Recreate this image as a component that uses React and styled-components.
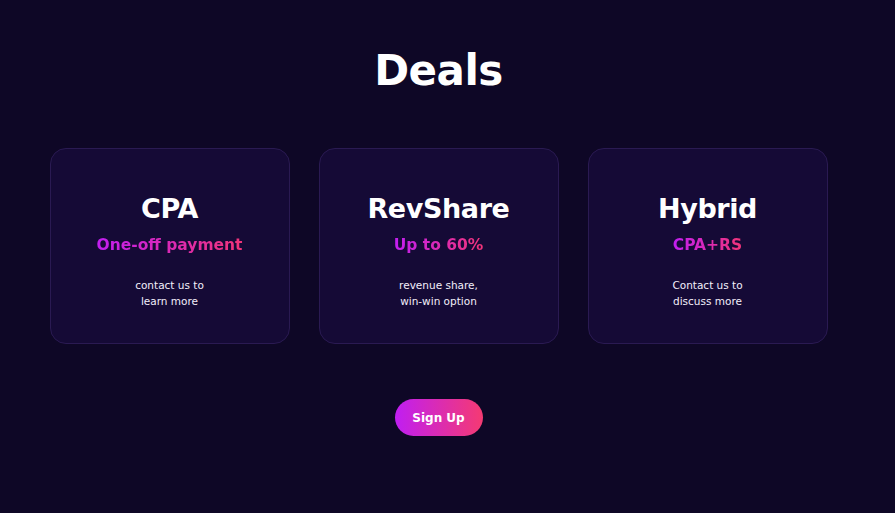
import React from 'react';
import styled, { createGlobalStyle } from 'styled-components';

const deals = [
  { title: 'CPA', sub: 'One-off payment', lines: ['contact us to', 'learn more'] },
  { title: 'RevShare', sub: 'Up to 60%', lines: ['revenue share,', 'win-win option'] },
  { title: 'Hybrid', sub: 'CPA+RS', lines: ['Contact us to', 'discuss more'] },
];

export default function App() {
  return (
    <>
      <Global />
      <Page>
        <Title>Deals</Title>
        <Cards>
          {deals.map((d) => (
            <Card key={d.title}>
              <CardTitle>{d.title}</CardTitle>
              <Sub>{d.sub}</Sub>
              <Desc>
                {d.lines.map((l) => (
                  <span key={l}>{l}</span>
                ))}
              </Desc>
            </Card>
          ))}
        </Cards>
        <Button>Sign Up</Button>
      </Page>
    </>
  );
}

const Global = createGlobalStyle`
html, body {
  margin: 0;
  background: #0e0726;
  font-family: "DejaVu Sans", "Noto Sans", sans-serif;
}
`;

const Page = styled.div`
width: 877px;
height: 513px;
display: flex;
flex-direction: column;
align-items: center;
padding-top: 44px;
box-sizing: border-box;
`;

const Title = styled.h1`
margin: 0;
font-size: 42px;
font-weight: 800;
color: #fff;
line-height: 54px;
letter-spacing: -0.5px;
`;

const Cards = styled.div`
display: flex;
gap: 29px;
margin-top: 50px;
`;

const Card = styled.div`
width: 240px;
height: 196px;
box-sizing: border-box;
background: #150a36;
border: 1px solid #2a1a52;
border-radius: 16px;
display: flex;
flex-direction: column;
align-items: center;
padding-top: 42px;
`;

const CardTitle = styled.h2`
margin: 0;
font-size: 27px;
font-weight: 800;
color: #fff;
line-height: 36px;
letter-spacing: -0.4px;
`;

const Sub = styled.div`
margin-top: 6px;
font-size: 15.5px;
font-weight: 700;
line-height: 24px;
background: linear-gradient(90deg, #c21ef2, #f23478);
-webkit-background-clip: text;
background-clip: text;
color: transparent;
`;

const Desc = styled.div`
margin-top: 20px;
display: flex;
flex-direction: column;
align-items: center;
font-size: 10.5px;
line-height: 16px;
color: #f2eefa;
`;

const Button = styled.button`
margin-top: 55px;
width: 88px;
height: 37px;
border: none;
border-radius: 19px;
background: linear-gradient(90deg, #c01ef2, #f53a72);
color: #fff;
font-family: inherit;
font-size: 12px;
font-weight: 700;
cursor: pointer;
`;
